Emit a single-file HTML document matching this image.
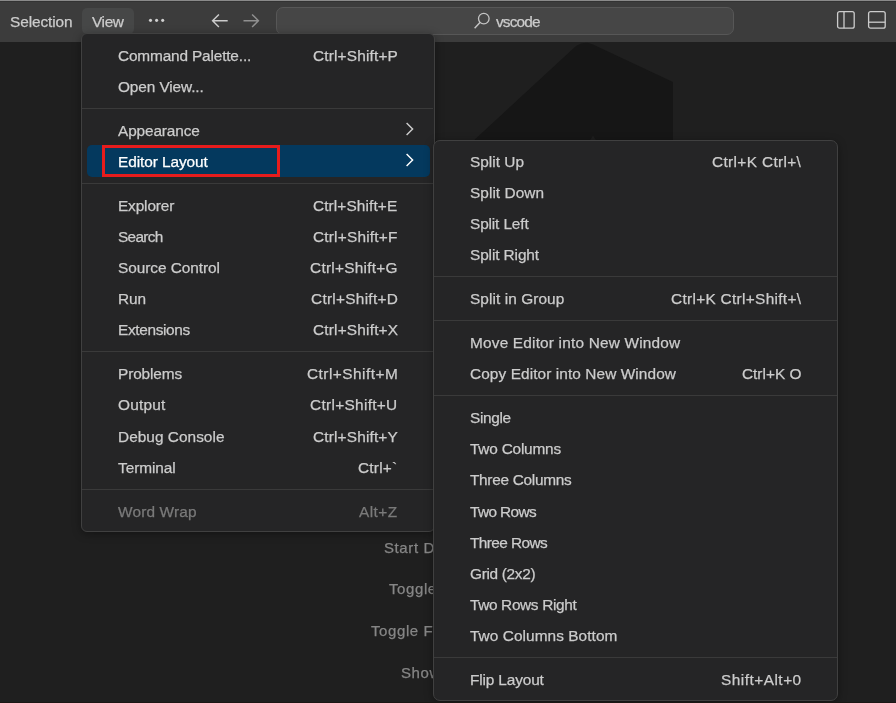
<!DOCTYPE html>
<html><head><meta charset="utf-8"><style>
html,body{margin:0;padding:0;}
body{width:896px;height:703px;overflow:hidden;position:relative;background:#1f1f1f;font-family:"Liberation Sans",sans-serif;font-size:15.4px;}
.abs{position:absolute;}
.t{position:absolute;white-space:nowrap;line-height:20px;height:20px;-webkit-text-stroke:0.25px currentColor;will-change:transform;}
.sep{height:1px;background:#3a3a3a;}
</style></head><body>
<div class="abs" style="left:0;top:0;width:896px;height:42px;background:#3c3c3c"></div>
<div class="abs" style="left:0;top:0;width:896px;height:1px;background:#8a8a8a"></div>
<div class="abs" style="left:0;top:1px;width:896px;height:1px;background:#333333"></div>
<div class="t" style="left:10px;top:11.66px;color:#cccccc;letter-spacing:-0.094px;">Selection</div>
<div class="abs" style="left:82px;top:8px;width:52px;height:25.5px;background:#464747;border-radius:5px"></div>
<div class="t" style="left:91.5px;top:11.66px;color:#cccccc;letter-spacing:-0.389px;">View</div>
<svg class="abs" style="left:140px;top:10px" width="30" height="20" viewBox="140 10 30 20"><circle cx="150.5" cy="20.35" r="1.55" fill="#d0d0d0"/><circle cx="156.6" cy="20.35" r="1.55" fill="#d0d0d0"/><circle cx="162.7" cy="20.35" r="1.55" fill="#d0d0d0"/></svg>
<svg class="abs" style="left:210px;top:12px" width="20" height="18" viewBox="0 0 20 18"><path d="M2.6 8.7 H17.7 M8.9 2.4 L2.6 8.7 L8.9 15" fill="none" stroke="#cccccc" stroke-width="1.45"/></svg>
<svg class="abs" style="left:242px;top:12px" width="20" height="18" viewBox="0 0 20 18"><path d="M1.5 8.7 H16.4 M10.1 2.4 L16.4 8.7 L10.1 15" fill="none" stroke="#909090" stroke-width="1.45"/></svg>
<div class="abs" style="left:276px;top:7px;width:458px;height:28px;box-sizing:border-box;background:#464646;border:1px solid #575757;border-radius:7px"></div>
<svg class="abs" style="left:472px;top:11px" width="20" height="20" viewBox="0 0 20 20"><circle cx="11.8" cy="7.6" r="5.3" fill="none" stroke="#c4c4c4" stroke-width="1.3"/><path d="M8.2 11.3 L2.6 17.2" stroke="#c4c4c4" stroke-width="1.4"/></svg>
<div class="t" style="left:496px;top:11.66px;color:#cccccc;letter-spacing:-0.841px;">vscode</div>
<svg class="abs" style="left:836px;top:10px" width="20" height="20" viewBox="0 0 20 20"><rect x="1.6" y="1.6" width="16.6" height="16.6" rx="2" fill="none" stroke="#cccccc" stroke-width="1.3"/><path d="M8 1.6 V18.2" stroke="#cccccc" stroke-width="1.3"/></svg>
<svg class="abs" style="left:867px;top:10px" width="20" height="20" viewBox="0 0 20 20"><rect x="1.6" y="1.6" width="16.6" height="16.6" rx="2" fill="none" stroke="#cccccc" stroke-width="1.3"/><path d="M1.6 12.2 H18.2" stroke="#cccccc" stroke-width="1.3"/></svg>

<svg class="abs" style="left:0;top:42px" width="896" height="661" viewBox="0 42 896 661"><path d="M300 301 L576 46 Q585 40.5 593 44.6 L673 82 L673 400 L300 400 Z" fill="#161616"/><path d="M589.5 141 L593 135.5 L596.5 141 Z" fill="#1e1e1e"/></svg>

<div class="t" style="font-size:15px;left:384.4px;top:537.7px;color:#868686;letter-spacing:0.6px">Start Debugging</div>
<div class="t" style="font-size:15px;left:389.4px;top:578.8px;color:#868686;letter-spacing:0.6px">Toggle Terminal</div>
<div class="t" style="font-size:15px;left:370.9px;top:620.8px;color:#868686;letter-spacing:0.6px">Toggle Full Screen</div>
<div class="t" style="font-size:15px;left:400.8px;top:663.2px;color:#868686;letter-spacing:0.6px">Show Settings</div>

<div class="abs" style="left:81px;top:33px;width:354px;height:499px;box-sizing:border-box;background:#252526;border:1px solid #404040;border-radius:6px;box-shadow:0 2px 8px rgba(0,0,0,0.36)"></div>
<div class="t" style="left:117.5px;top:45.56px;color:#cccccc;letter-spacing:-0.161px;">Command Palette...</div>
<div class="t" style="right:498.23px;top:45.56px;color:#cccccc;letter-spacing:0.172px;">Ctrl+Shift+P</div>
<div class="t" style="left:117.5px;top:76.76px;color:#cccccc;letter-spacing:-0.110px;">Open View...</div>
<div class="t" style="left:117.5px;top:120.56px;color:#cccccc;letter-spacing:-0.127px;">Appearance</div>
<svg class="abs" style="left:405px;top:121.10px" width="12" height="16" viewBox="0 0 12 16"><path d="M1.6 2.1 L7.6 8 L1.6 13.9" fill="none" stroke="#cccccc" stroke-width="1.45"/></svg>
<div class="abs" style="left:86.5px;top:145.0px;width:343px;height:32.2px;background:#04395e;border-radius:5px"></div>
<div class="t" style="left:117.5px;top:151.76px;color:#ffffff;letter-spacing:-0.068px;">Editor Layout</div>
<svg class="abs" style="left:405px;top:152.30px" width="12" height="16" viewBox="0 0 12 16"><path d="M1.6 2.1 L7.6 8 L1.6 13.9" fill="none" stroke="#ffffff" stroke-width="1.45"/></svg>
<div class="abs" style="left:102px;top:145.0px;width:178px;height:32.2px;box-sizing:border-box;border:3px solid #e71c1c"></div>
<div class="t" style="left:117.5px;top:195.56px;color:#cccccc;letter-spacing:-0.141px;">Explorer</div>
<div class="t" style="right:498.29px;top:195.56px;color:#cccccc;letter-spacing:0.108px;">Ctrl+Shift+E</div>
<div class="t" style="left:117.5px;top:226.76px;color:#cccccc;letter-spacing:-0.701px;">Search</div>
<div class="t" style="right:498.20px;top:226.76px;color:#cccccc;letter-spacing:0.199px;">Ctrl+Shift+F</div>
<div class="t" style="left:117.5px;top:257.96px;color:#cccccc;letter-spacing:-0.057px;">Source Control</div>
<div class="t" style="right:498.14px;top:257.96px;color:#cccccc;letter-spacing:0.263px;">Ctrl+Shift+G</div>
<div class="t" style="left:117.5px;top:289.16px;color:#cccccc;letter-spacing:-0.037px;">Run</div>
<div class="t" style="right:498.13px;top:289.16px;color:#cccccc;letter-spacing:0.272px;">Ctrl+Shift+D</div>
<div class="t" style="left:117.5px;top:320.36px;color:#cccccc;letter-spacing:-0.343px;">Extensions</div>
<div class="t" style="right:498.21px;top:320.36px;color:#cccccc;letter-spacing:0.190px;">Ctrl+Shift+X</div>
<div class="t" style="left:117.5px;top:364.16px;color:#cccccc;letter-spacing:-0.116px;">Problems</div>
<div class="t" style="right:497.93px;top:364.16px;color:#cccccc;letter-spacing:0.472px;">Ctrl+Shift+M</div>
<div class="t" style="left:117.5px;top:395.36px;color:#cccccc;letter-spacing:0.215px;">Output</div>
<div class="t" style="right:498.09px;top:395.36px;color:#cccccc;letter-spacing:0.308px;">Ctrl+Shift+U</div>
<div class="t" style="left:117.5px;top:426.56px;color:#cccccc;letter-spacing:0.030px;">Debug Console</div>
<div class="t" style="right:498.24px;top:426.56px;color:#cccccc;letter-spacing:0.163px;">Ctrl+Shift+Y</div>
<div class="t" style="left:117.5px;top:457.76px;color:#cccccc;letter-spacing:-0.063px;">Terminal</div>
<div class="t" style="right:498.18px;top:457.76px;color:#cccccc;letter-spacing:0.215px;">Ctrl+`</div>
<div class="t" style="left:117.5px;top:501.56px;color:#7a7a7a;letter-spacing:0.162px;">Word Wrap</div>
<div class="t" style="right:497.94px;top:501.56px;color:#7a7a7a;letter-spacing:0.463px;">Alt+Z</div>
<div class="abs sep" style="left:82px;width:351px;top:107.7px"></div>
<div class="abs sep" style="left:82px;width:351px;top:182.7px"></div>
<div class="abs sep" style="left:82px;width:351px;top:351.3px"></div>
<div class="abs sep" style="left:82px;width:351px;top:488.7px"></div>

<div class="abs" style="left:433px;top:140px;width:405px;height:561px;box-sizing:border-box;background:#252526;border:1px solid #404040;border-radius:7px;box-shadow:0 2px 8px rgba(0,0,0,0.36)"></div>
<div class="t" style="left:470.2px;top:151.76px;color:#cccccc;letter-spacing:0.010px;">Split Up</div>
<div class="t" style="right:94.45px;top:151.76px;color:#cccccc;letter-spacing:0.351px;">Ctrl+K Ctrl+\</div>
<div class="t" style="left:470.2px;top:182.96px;color:#cccccc;letter-spacing:0.044px;">Split Down</div>
<div class="t" style="left:470.2px;top:214.16px;color:#cccccc;letter-spacing:-0.135px;">Split Left</div>
<div class="t" style="left:470.2px;top:245.36px;color:#cccccc;letter-spacing:-0.107px;">Split Right</div>
<div class="t" style="left:470.2px;top:289.16px;color:#cccccc;letter-spacing:0.078px;">Split in Group</div>
<div class="t" style="right:94.49px;top:289.16px;color:#cccccc;letter-spacing:0.307px;">Ctrl+K Ctrl+Shift+\</div>
<div class="t" style="left:470.2px;top:332.96px;color:#cccccc;letter-spacing:0.186px;">Move Editor into New Window</div>
<div class="t" style="left:470.2px;top:364.16px;color:#cccccc;letter-spacing:0.090px;">Copy Editor into New Window</div>
<div class="t" style="right:94.81px;top:364.16px;color:#cccccc;letter-spacing:-0.009px;">Ctrl+K O</div>
<div class="t" style="left:470.2px;top:407.96px;color:#cccccc;letter-spacing:-0.325px;">Single</div>
<div class="t" style="left:470.2px;top:439.16px;color:#cccccc;letter-spacing:-0.213px;">Two Columns</div>
<div class="t" style="left:470.2px;top:470.36px;color:#cccccc;letter-spacing:-0.293px;">Three Columns</div>
<div class="t" style="left:470.2px;top:501.56px;color:#cccccc;letter-spacing:-0.627px;">Two Rows</div>
<div class="t" style="left:470.2px;top:532.76px;color:#cccccc;letter-spacing:-0.597px;">Three Rows</div>
<div class="t" style="left:470.2px;top:563.96px;color:#cccccc;letter-spacing:-0.321px;">Grid (2x2)</div>
<div class="t" style="left:470.2px;top:595.16px;color:#cccccc;letter-spacing:-0.347px;">Two Rows Right</div>
<div class="t" style="left:470.2px;top:626.36px;color:#cccccc;letter-spacing:0.062px;">Two Columns Bottom</div>
<div class="t" style="left:470.2px;top:670.16px;color:#cccccc;letter-spacing:-0.141px;">Flip Layout</div>
<div class="t" style="right:94.31px;top:670.16px;color:#cccccc;letter-spacing:0.487px;">Shift+Alt+0</div>
<div class="abs sep" style="left:434px;width:403px;top:276.3px"></div>
<div class="abs sep" style="left:434px;width:403px;top:320.1px"></div>
<div class="abs sep" style="left:434px;width:403px;top:395.1px"></div>
<div class="abs sep" style="left:434px;width:403px;top:657.3px"></div>
<div class="abs" style="left:0;top:702px;width:896px;height:1px;background:#1b1714"></div>
</body></html>
